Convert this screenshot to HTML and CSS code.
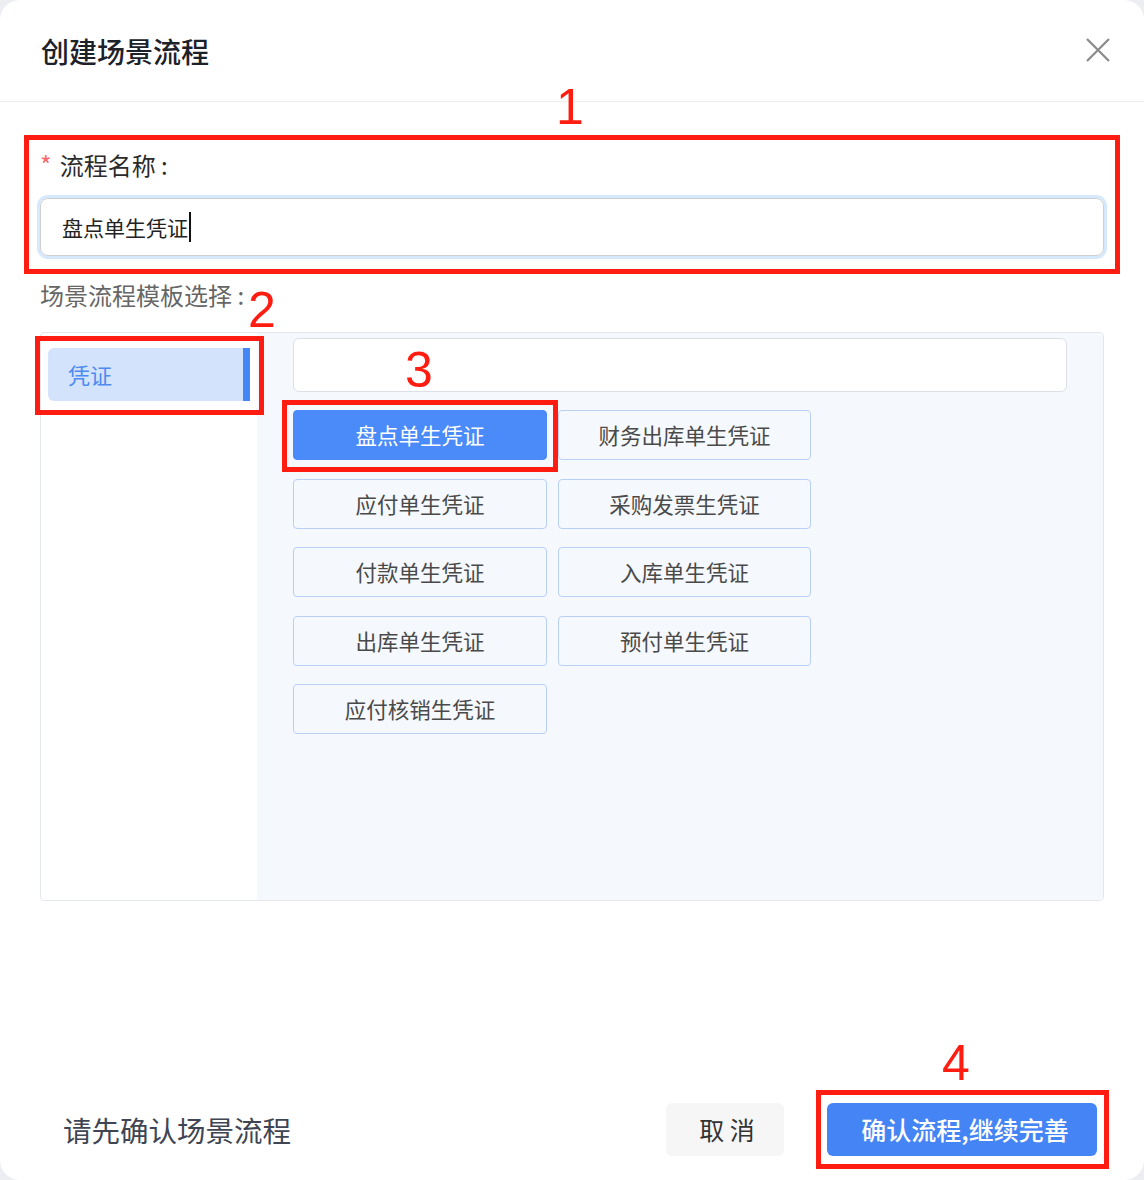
FILE: index.html
```html
<!DOCTYPE html>
<html lang="zh-CN">
<head>
  <meta charset="UTF-8">
  <title>创建场景流程</title>
  <meta name="viewport" content="width=device-width, initial-scale=1">
  <link rel="stylesheet" href="styles.css">
</head>
<body>
  <div class="dialog">
    <div class="dialog-header">
      <div class="dialog-title">创建场景流程</div>
      <span class="dialog-close" aria-label="关闭">
        <svg width="26" height="26" viewBox="0 0 26 26">
          <path d="M2 2 L24 24 M24 2 L2 24" stroke="#8a8a8a" stroke-width="2.2" fill="none"/>
        </svg>
      </span>
    </div>

    <div class="dialog-body">
      <div class="form-label"><span class="required">*</span>流程名称 :</div>
      <div class="name-input">盘点单生凭证<span class="caret"></span></div>

      <div class="form-label muted">场景流程模板选择 :</div>
      <div class="template-panel">
        <div class="category-list">
          <div class="category-item active">凭证</div>
        </div>
        <div class="template-area">
          <div class="search-input"></div>
          <div class="template-grid">
            <div class="template-btn selected">盘点单生凭证</div>
            <div class="template-btn">财务出库单生凭证</div>
            <div class="template-btn">应付单生凭证</div>
            <div class="template-btn">采购发票生凭证</div>
            <div class="template-btn">付款单生凭证</div>
            <div class="template-btn">入库单生凭证</div>
            <div class="template-btn">出库单生凭证</div>
            <div class="template-btn">预付单生凭证</div>
            <div class="template-btn">应付核销生凭证</div>
          </div>
        </div>
      </div>
    </div>

    <div class="dialog-footer">
      <div class="footer-hint">请先确认场景流程</div>
      <div class="footer-actions">
        <div class="btn btn-cancel">取 消</div>
        <div class="btn btn-primary">确认流程,继续完善</div>
      </div>
    </div>

    <!-- annotation marks -->
    <div class="mark-box box-1"></div>
    <div class="mark-box box-2"></div>
    <div class="mark-box box-3"></div>
    <div class="mark-box box-4"></div>
    <div class="mark-num num-1">1</div>
    <div class="mark-num num-2">2</div>
    <div class="mark-num num-3">3</div>
    <div class="mark-num num-4">4</div>
  </div>
</body>
</html>
```

FILE: styles.css
```css
body {
  margin: 0;
  background: #eceef1;
  font-family: "Noto Sans CJK SC", "Noto Sans", sans-serif;
  color: #333;
}

.dialog {
  position: relative;
  width: 1144px;
  height: 1180px;
  background: #fff;
  border-radius: 20px;
  display: flex;
  flex-direction: column;
  overflow: hidden;
}

.dialog-header {
  height: 101px;
  border-bottom: 1px solid #eceef2;
  display: flex;
  align-items: center;
  justify-content: space-between;
  padding: 0 33px 0 41px;
  flex-shrink: 0;
}
.dialog-title {
  font-size: 28px;
  font-weight: 500;
  color: #1d2129;
}
.dialog-close {
  display: block;
  width: 26px;
  height: 26px;
  margin-top: -2px;
}

.dialog-body {
  flex: 1;
  padding: 46px 40px 0 40px;
}

.form-label {
  font-size: 24px;
  line-height: 32px;
  color: #2b2b2b;
}
.form-label.muted {
  color: #666;
  margin-top: 23px;
}
.required {
  color: #f56c6c;
  margin-right: 8px;
  font-size: 25px;
}

.name-input {
  margin-top: 17px;
  height: 56px;
  border: 1px solid #cfcfcf;
  border-radius: 8px;
  box-shadow: 0 0 0 3px #d6e8fc;
  padding-left: 21px;
  font-size: 21px;
  line-height: 56px;
  color: #222;
  display: flex;
  align-items: center;
}
.caret {
  display: inline-block;
  width: 2px;
  height: 30px;
  background: #111;
  margin-left: 1px;
}

.template-panel {
  margin-top: 21px;
  height: 567px;
  border: 1px solid #e4e7ed;
  border-radius: 4px;
  display: flex;
  overflow: hidden;
}
.category-list {
  width: 216px;
  padding: 15px 7px 0 7px;
  box-sizing: border-box;
  flex-shrink: 0;
}
.category-item {
  height: 53px;
  line-height: 53px;
  padding-left: 20px;
  font-size: 22px;
  color: #4f8af0;
  border-radius: 6px 0 0 6px;
}
.category-item.active {
  background: #d2e3fb;
  border-right: 7px solid #4587f5;
}

.template-area {
  flex: 1;
  background: #f5f8fc;
  padding: 5px 36px 0 36px;
}
.search-input {
  height: 52px;
  background: #fff;
  border: 1px solid #dcdfe6;
  border-radius: 6px;
}
.template-grid {
  margin-top: 18px;
  display: grid;
  grid-template-columns: 254px 253px;
  column-gap: 11px;
  row-gap: 18.5px;
}
.template-btn {
  height: 48px;
  border: 1px solid #b8cff6;
  border-radius: 4px;
  text-align: center;
  line-height: 48px;
  font-size: 21.5px;
  color: #4a4a4a;
}
.template-btn.selected {
  background: #4a8af9;
  border-color: #4a8af9;
  color: #fff;
}

.dialog-footer {
  display: flex;
  align-items: center;
  justify-content: space-between;
  padding: 0 47px 24px 63px;
  flex-shrink: 0;
}
.footer-hint {
  font-size: 28.5px;
  color: #3f4553;
}
.footer-actions {
  display: flex;
  gap: 43px;
}
.btn {
  height: 53px;
  line-height: 53px;
  border-radius: 6px;
  text-align: center;
  font-size: 25px;
}
.btn-cancel {
  width: 118px;
  background: #f6f6f6;
  color: #333;
  padding-left: 4px;
  box-sizing: border-box;
}
.btn-primary {
  width: 270px;
  background: #4584f5;
  color: #fff;
  font-weight: 500;
  padding-left: 6px;
  box-sizing: border-box;
}

.mark-box {
  position: absolute;
  border: 5px solid #ff1d12;
  box-sizing: border-box;
  pointer-events: none;
}
.box-1 { left: 24px; top: 135px; width: 1096px; height: 139px; }
.box-2 { left: 35px; top: 336px; width: 229px; height: 79px; }
.box-3 { left: 282px; top: 400px; width: 276px; height: 72px; }
.box-4 { left: 816px; top: 1090px; width: 293px; height: 79px; }

.mark-num {
  position: absolute;
  font-family: "Liberation Sans", Arial, sans-serif;
  font-size: 50px;
  line-height: 1;
  color: #ff1d12;
}
.num-1 { left: 556px; top: 82px; }
.num-2 { left: 248px; top: 285px; }
.num-3 { left: 405px; top: 345px; }
.num-4 { left: 942px; top: 1038px; }
```
